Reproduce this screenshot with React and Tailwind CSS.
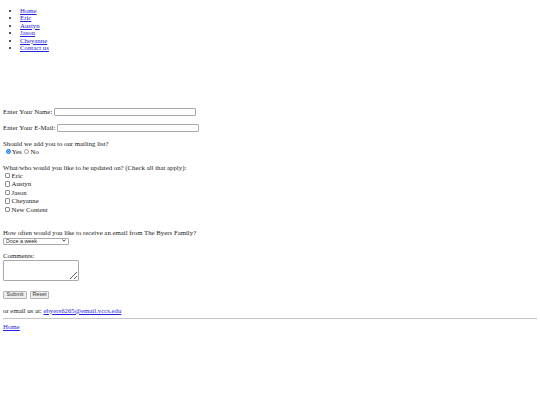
import React from 'react'

const links = ['Home', 'Eric', 'Austyn', 'Jason', 'Cheyanne', 'Contact us']
const people = ['Eric', 'Austyn', 'Jason', 'Cheyanne', 'New Content']

function Link({ children }) {
  return <a href="#" className="text-[#2424e0] underline decoration-[0.5px]">{children}</a>
}

const radio = "h-[5px] w-[5px] appearance-none rounded-full border border-[#9a9a9a] bg-white checked:border-[#1a7cf5] checked:bg-[#1a7cf5] checked:shadow-[inset_0_0_0_0.4px_white]"

export default function App() {
  return (
    <div className="min-h-[405px] bg-white px-[3px] font-['Liberation_Serif',serif] text-[6.8px] leading-[7.5px] text-[#1a1a1a]">
      <ul className="mt-[6.5px] list-disc pl-[17px]">
        {links.map((l) => (
          <li key={l}><Link>{l}</Link></li>
        ))}
      </ul>

      <form className="flex flex-col" onSubmit={(e) => e.preventDefault()}>
        <div className="mt-[56px] flex h-[9px] items-center gap-[1.5px]">
          <span>Enter Your Name:</span>
          <input type="text" className="h-[7.5px] w-[142px] rounded-[1px] border border-[#aaaaaa] bg-white" />
        </div>
        <div className="mt-[7px] flex h-[9px] items-center gap-[1.5px]">
          <span>Enter Your E-Mail:</span>
          <input type="text" className="h-[7.5px] w-[142px] rounded-[1px] border border-[#aaaaaa] bg-white" />
        </div>

        <div className="mt-[7.5px]">Should we add you to our mailing list?</div>
        <div className="flex h-[8px] items-center">
          <input type="radio" name="list" defaultChecked className={`ml-[2.5px] mr-[1.3px] ${radio}`} />
          <span>Yes</span>
          <input type="radio" name="list" className={`ml-[2.5px] mr-[1.3px] ${radio}`} />
          <span>No</span>
        </div>

        <div className="mt-[8.25px]">What/who would you like to be updated on? (Check all that apply):</div>
        {people.map((p) => (
          <div key={p} className="flex h-[8.5px] items-center">
            <input type="checkbox" className="ml-[1.8px] mr-[1.2px] h-[5.5px] w-[5.5px] appearance-none rounded-[1px] border border-[#8f8f8f] bg-white" />
            <span>{p}</span>
          </div>
        ))}

        <div className="mt-[15px]">How often would you like to receive an email from The Byers Family?</div>
        <div className="relative mt-[0.75px] h-[7px] w-[66px]">
          <select className="h-[7px] w-[66px] appearance-none rounded-[1px] border border-[#aaaaaa] bg-white pl-[1.5px] font-['Liberation_Sans',sans-serif] text-[5.4px] leading-[5px]">
            <option>Once a week</option>
            <option>Once a month</option>
          </select>
          <svg className="pointer-events-none absolute right-[3px] top-[2.2px]" width="4" height="3" viewBox="0 0 4 3">
            <path d="M0.5 0.6 L2 2.2 L3.5 0.6" fill="none" stroke="#111" strokeWidth="0.8" />
          </svg>
        </div>

        <div className="mt-[7.75px]">Comments:</div>
        <textarea className="mt-[0.25px] h-[21px] w-[76px] rounded-[1px] border border-[#aaaaaa] bg-white" />

        <div className="mt-[10.5px] flex gap-[3px]">
          <button type="submit" className="h-[7.5px] w-[24px] rounded-[1px] border border-[#b4b4b4] bg-[#efefef] font-['Liberation_Sans',sans-serif] text-[5.4px] leading-[5px] text-[#333]">Submit</button>
          <button type="reset" className="h-[7.5px] w-[19px] rounded-[1px] border border-[#b4b4b4] bg-[#efefef] font-['Liberation_Sans',sans-serif] text-[5.4px] leading-[5px] text-[#333]">Reset</button>
        </div>
      </form>

      <div className="mt-[8.25px]">or email us at: <Link>ebyers6265@email.vccs.edu</Link></div>
      <hr className="mt-[3.25px] border-t border-[#c4c4c4]" />
      <div className="mt-[4.25px]"><Link>Home</Link></div>
    </div>
  )
}
